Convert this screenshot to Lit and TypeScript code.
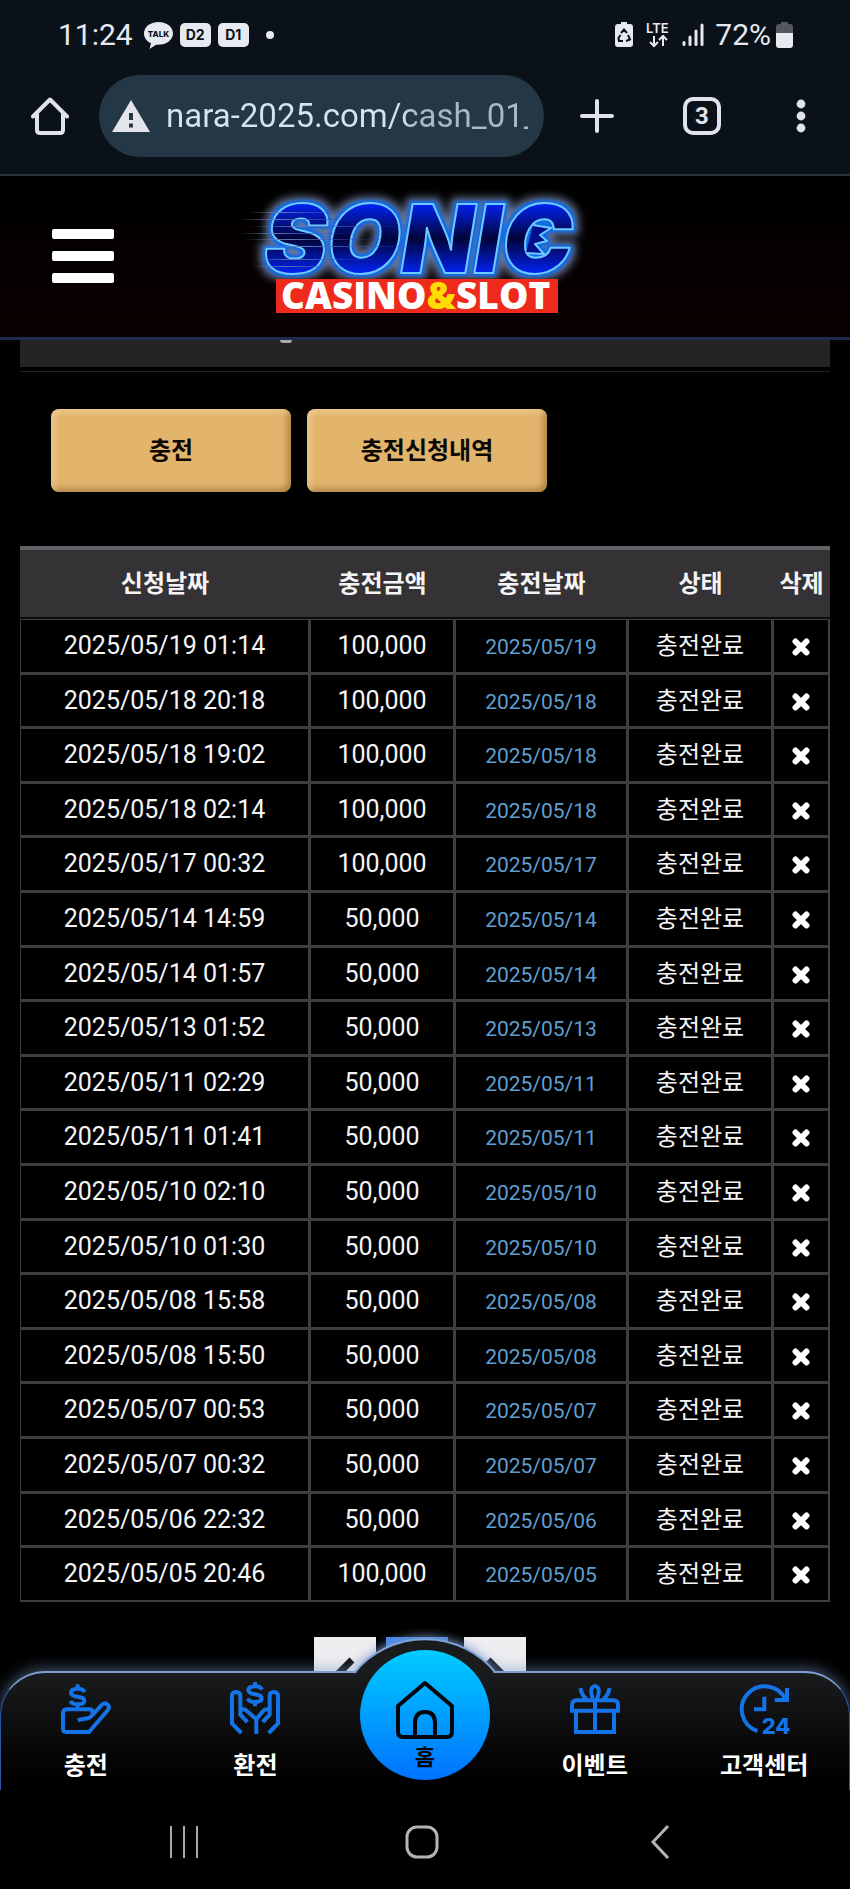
import { LitElement, html, css, svg } from 'lit';
import { customElement, property } from 'lit/decorators.js';

interface Deposit {
  requested: string;
  amount: string;
  date: string;
}

const DEPOSITS: Deposit[] = [
  ['2025/05/19 01:14', '100,000'],
  ['2025/05/18 20:18', '100,000'],
  ['2025/05/18 19:02', '100,000'],
  ['2025/05/18 02:14', '100,000'],
  ['2025/05/17 00:32', '100,000'],
  ['2025/05/14 14:59', '50,000'],
  ['2025/05/14 01:57', '50,000'],
  ['2025/05/13 01:52', '50,000'],
  ['2025/05/11 02:29', '50,000'],
  ['2025/05/11 01:41', '50,000'],
  ['2025/05/10 02:10', '50,000'],
  ['2025/05/10 01:30', '50,000'],
  ['2025/05/08 15:58', '50,000'],
  ['2025/05/08 15:50', '50,000'],
  ['2025/05/07 00:53', '50,000'],
  ['2025/05/07 00:32', '50,000'],
  ['2025/05/06 22:32', '50,000'],
  ['2025/05/05 20:46', '100,000'],
].map(([requested, amount]) => ({ requested, amount, date: requested.slice(0, 10) }));

const dollar = svg`
  <path d="M71 24Q66 14 50 14Q30 14 30 26Q30 35 50 38Q70 41 70 50Q70 61 50 61Q34 61 28 51M50 1V14M50 61V74"/>
`;

const ICONS: Record<string, unknown> = {
  deposit: svg`
    ${dollar}
    <path d="M95 92L121 64Q130 54 139 61Q148 69 140 79L84 144H16Q6 144 6 134V88Q6 76 18 76H84Q95 76 95 86Q95 98 80 103L50 108"/>
  `,
  withdraw: svg`
    <g transform="translate(25 -7)">${dollar}</g>
    <path d="M34 147L6 118V36Q6 24 18 24Q31 24 31 36V92L52 114M31 82Q38 70 50 80L79 106V150"/>
    <path d="M116 147L144 118V36Q144 24 132 24Q119 24 119 36V92L98 114M119 82Q112 70 100 80L79 106"/>
  `,
  gift: svg`
    <path d="M6 86V64Q6 49 20 49H130Q144 49 144 64V80H6M18 86V144H132V86M75 49V144M69 46Q60 20 66 12Q75 0 84 12Q90 20 81 46M31 12Q36 36 50 45M119 12Q114 36 100 45"/>
  `,
  support: svg`
    <path d="M55 141A69 69 0 1 1 140 47M144 12V48H107M76 38V76H45"/>
    <text x="68" y="149" class="hours">24</text>
  `,
};

@customElement('phone-status')
export class PhoneStatus extends LitElement {
  static styles = css`
    :host {
      display: flex;
      align-items: center;
      justify-content: space-between;
      height: 70px;
      padding: 0 57px 0 58px;
      color: #e6e9ef;
      font: 30px/36px Roboto, sans-serif;
    }
    .side {
      display: flex;
      align-items: center;
      gap: 7px;
    }
    .right {
      gap: 5px;
    }
    .talk,
    .lte,
    .signal,
    .saver {
      display: block;
      margin-right: 6px;
    }
    .saver {
      margin-right: 8px;
    }
    .talk {
      margin: 0 0 0 4px;
    }
    .sim {
      width: 31px;
      height: 24px;
      border-radius: 5px;
      background: #e6e9ef;
      color: #0b1118;
      font: bold 14px/24px Inter, sans-serif;
      text-align: center;
    }
    .dot {
      width: 8px;
      height: 8px;
      margin-left: 10px;
      border-radius: 50%;
      background: #e6e9ef;
    }
    text {
      font-family: Inter, sans-serif;
      font-weight: 800;
    }
    .lte text {
      font-weight: 600;
    }
  `;

  render() {
    return html`
      <div class="side">
        <span>11:24</span>
        <svg class="talk" width="29" height="27" viewBox="0 0 29 27" fill="#e6e9ef">
          <path d="M14.500 0C6 0 0 5 0 11.500C0 16 3 19.500 7 21.300L5.500 27L12 22.800C22 23.500 29 18 29 11.500C29 5 23 0 14.500 0Z"/>
          <text x="14.500" y="15" font-size="8" text-anchor="middle" fill="#0b1118">TALK</text>
        </svg>
        <span class="sim">D2</span>
        <span class="sim">D1</span>
        <span class="dot"></span>
      </div>
      <div class="side right">
        <svg class="saver" width="18" height="26" viewBox="0 0 18 26">
          <path fill="#e6e9ef" d="M6 0H12V2H15Q18 2 18 5V22Q18 25 15 25H3Q0 25 0 22V5Q0 2 3 2H6Z"/>
          <path fill="none" stroke="#0b1118" stroke-width="2" d="M6 11L9 7.500L12 11M13 13L15 17.500L11 19M8 19H4L3.500 16L5.500 13"/>
        </svg>
        <svg class="lte" width="25" height="32" viewBox="0 0 25 32">
          <text x="0" y="14" font-size="13" fill="#e6e9ef">LTE</text>
          <path fill="none" stroke="#e6e9ef" stroke-width="2" d="M8 17V27M4 23L8 27L12 23M17 27V17M13 21L17 17L21 21"/>
        </svg>
        <svg class="signal" width="22" height="24" viewBox="0 0 22 24" stroke="#e6e9ef" stroke-width="3" stroke-linecap="round">
          <path d="M2 19.500V21.500M8 14V21.500M14 8V21.500M20 2V21.500"/>
        </svg>
        <span>72%</span>
        <svg width="17" height="26" viewBox="0 0 17 26">
          <path fill="#54575e" d="M5 0H12V2H14Q17 2 17 5V12H0V5Q0 2 3 2H5Z"/>
          <path fill="#e6e9ef" d="M0 11H17V23Q17 26 14 26H3Q0 26 0 23Z"/>
        </svg>
      </div>
    `;
  }
}

@customElement('browser-bar')
export class BrowserBar extends LitElement {
  static styles = css`
    :host {
      display: flex;
      align-items: center;
      height: 92px;
      padding: 0 41px 12px 31px;
      border-bottom: 2px solid #2c3238;
      color: #dfe3ec;
    }
    button {
      display: flex;
      flex: none;
      align-items: center;
      justify-content: center;
      padding: 0;
      border: 0;
      background: none;
      color: inherit;
    }
    .address {
      display: flex;
      flex: 1;
      align-items: center;
      gap: 16px;
      min-width: 0;
      height: 82px;
      box-sizing: border-box;
      margin: 0 34px 0 30px;
      padding: 0 16px 0 13px;
      border-radius: 41px;
      background: #233746;
    }
    .warn {
      flex: none;
    }
    input {
      flex: 1;
      min-width: 0;
      height: 48px;
      padding: 0;
      border: 0;
      outline: 0;
      background: linear-gradient(90deg, #d3e4f0 65%, #a5b9c8 69%);
      background-clip: text;
      -webkit-background-clip: text;
      color: transparent;
      font: 33px/48px Roboto, sans-serif;
    }
    .plus {
      width: 38px;
    }
    .tabs {
      width: 38px;
      height: 38px;
      margin: 0 72px 0 67px;
      box-sizing: border-box;
      border: 4px solid #dfe3ec;
      border-radius: 10px;
      font: bold 24px/30px Roboto, sans-serif;
    }
    .more {
      width: 16px;
    }
  `;

  render() {
    return html`
      <button aria-label="Home">
        <svg width="38" height="38" viewBox="0 0 38 38" fill="none" stroke="currentColor" stroke-width="4" stroke-linecap="round" stroke-linejoin="round">
          <path d="M2 19.500L19 2.500L36 19.500M6 17V33Q6 36 9 36H29Q32 36 32 33V17"/>
        </svg>
      </button>
      <div class="address">
        <svg class="warn" width="38" height="32" viewBox="0 0 38 32">
          <path fill="#e3e5ea" d="M19 0L38 32H0Z"/>
          <path stroke="#233746" stroke-width="4" d="M19 13V20M19 23.500V27.500"/>
        </svg>
        <input type="text" aria-label="Address" value="nara-2025.com/cash_01_" />
      </div>
      <button class="plus" aria-label="New tab">
        <svg width="34" height="34" viewBox="0 0 34 34" stroke="currentColor" stroke-width="4" stroke-linecap="round">
          <path d="M17 2V32M2 17H32"/>
        </svg>
      </button>
      <button class="tabs" aria-label="Tabs">3</button>
      <button class="more" aria-label="Menu">
        <svg width="10" height="34" viewBox="0 0 10 34" fill="currentColor">
          <circle cx="5" cy="5" r="4.400"/><circle cx="5" cy="17" r="4.400"/><circle cx="5" cy="29" r="4.400"/>
        </svg>
      </button>
    `;
  }
}

@customElement('site-header')
export class SiteHeader extends LitElement {
  static styles = css`
    :host {
      display: grid;
      grid-template-columns: 1fr auto 1fr;
      align-items: center;
      height: 164px;
      box-sizing: border-box;
      padding: 0 52px 2px;
      border-bottom: 3px solid #20294f;
      background: linear-gradient(#000, #0b0001);
    }
    .menu {
      display: flex;
      flex-direction: column;
      gap: 12px;
      width: 62px;
      padding: 0;
      border: 0;
      background: none;
    }
    .bar {
      height: 10px;
      border-radius: 2px;
      background: #fff;
    }
    .logo {
      display: block;
      overflow: visible;
    }
    .sonic {
      font: italic 900 95px Inter, sans-serif;
    }
    .sub {
      font: 800 37px 'Open Sans', sans-serif;
    }
  `;

  render() {
    return html`
      <button class="menu" aria-label="메뉴">
        <span class="bar"></span><span class="bar"></span><span class="bar"></span>
      </button>
      <a href="#" aria-label="SONIC CASINO&SLOT">
        <svg class="logo" width="360" height="150" viewBox="20 0 360 150">
          <defs>
            <filter id="neon" x="-20%" y="-40%" width="140%" height="180%" color-interpolation-filters="sRGB">
              <feMorphology in="SourceAlpha" operator="dilate" radius="5" result="wide"/>
              <feGaussianBlur in="wide" stdDeviation="4" result="haze"/>
              <feFlood flood-color="#8193c0" flood-opacity="0.800"/>
              <feComposite in2="haze" operator="in" result="outer"/>
              <feMorphology in="SourceAlpha" operator="dilate" radius="2" result="near"/>
              <feGaussianBlur in="near" stdDeviation="1.500" result="soft"/>
              <feFlood flood-color="#0a68ec"/>
              <feComposite in2="soft" operator="in" result="inner"/>
              <feMerge>
                <feMergeNode in="outer"/>
                <feMergeNode in="inner"/>
                <feMergeNode in="SourceGraphic"/>
              </feMerge>
            </filter>
            <linearGradient id="body" x1="0" x2="0" y1="0" y2="1">
              <stop offset="0.200" stop-color="#0222f0"/>
              <stop offset="0.500" stop-color="#010438"/>
              <stop offset="0.800" stop-color="#0222f0"/>
            </linearGradient>
            <linearGradient id="speed">
              <stop offset="0" stop-color="#5f7ab0" stop-opacity="0"/>
              <stop offset="0.300" stop-color="#5f7ab0"/>
              <stop offset="1" stop-color="#0a2bd0" stop-opacity="0"/>
            </linearGradient>
          </defs>
          <g filter="url(#neon)" stroke="#6fc8ff" stroke-width="2" stroke-linejoin="round">
            <text class="sonic" x="39" y="92" fill="url(#body)">SONIC</text>
            <path fill="#010e8c" d="M308 44L326 47L315 54L322 60L310 63L319 73L301 72"/>
          </g>
          <g fill="url(#speed)">
            <rect x="24" y="31" width="110" height="1"/>
            <rect x="15" y="38" width="130" height="1"/>
            <rect x="24" y="45" width="170" height="1"/>
            <rect x="14" y="52" width="120" height="1"/>
            <rect x="19" y="58" width="150" height="1"/>
            <rect x="27" y="65" width="180" height="1"/>
            <rect x="28" y="78" width="130" height="1"/>
            <rect x="27" y="85" width="110" height="1"/>
          </g>
          <rect x="51" y="98" width="282" height="34" fill="#ee2a1c"/>
          <text class="sub" x="56" y="128" fill="#fff">CASINO<tspan fill="#ffdc00">&amp;</tspan>SLOT</text>
        </svg>
      </a>
    `;
  }
}

@customElement('deposit-table')
export class DepositTable extends LitElement {
  @property({ attribute: false }) rows: Deposit[] = [];

  static styles = css`
    :host {
      display: block;
    }
    table {
      width: 100%;
      border-spacing: 0;
      table-layout: fixed;
      color: #f4f4f6;
      font: 24px/36px Roboto, 'Noto Sans CJK KR', sans-serif;
      text-align: center;
    }
    .amount,
    .state {
      width: 145px;
    }
    .processed {
      width: 173px;
    }
    .remove {
      width: 57px;
    }
    th {
      height: 73px;
      box-sizing: border-box;
      padding: 0;
      border-top: 4px solid #646266;
      border-bottom: 2px solid #0c0c0d;
      background: #343235;
      font-weight: bold;
    }
    td {
      height: 55px;
      box-sizing: border-box;
      padding: 0;
      border: solid #3f3d41;
      border-width: 1px 2px 2px 1px;
    }
    tr:nth-child(5n + 2) td,
    tr:nth-child(5n + 4) td {
      height: 54px;
    }
    .num {
      font-size: 25px;
    }
    .date {
      padding-top: 2px;
      color: #5f9fd0;
      font-size: 21px;
    }
    button {
      display: block;
      margin: 0 auto;
      padding: 2px 0 0;
      border: 0;
      background: none;
    }
    svg {
      display: block;
    }
  `;

  render() {
    return html`
      <table>
        <thead>
          <tr>
            <th>신청날짜</th>
            <th class="amount">충전금액</th>
            <th class="processed">충전날짜</th>
            <th class="state">상태</th>
            <th class="remove">삭제</th>
          </tr>
        </thead>
        <tbody>
          ${this.rows.map(
            (row) => html`
              <tr>
                <td class="num">${row.requested}</td>
                <td class="num">${row.amount}</td>
                <td class="date">${row.date}</td>
                <td>충전완료</td>
                <td>
                  <button aria-label="삭제">
                    <svg width="18" height="18" viewBox="0 0 18 18" stroke="#fff" stroke-width="6" stroke-linecap="round">
                      <path d="M3.500 3.500L14.500 14.500M14.500 3.500L3.500 14.500"/>
                    </svg>
                  </button>
                </td>
              </tr>
            `
          )}
        </tbody>
      </table>
    `;
  }
}

@customElement('bottom-nav')
export class BottomNav extends LitElement {
  static styles = css`
    :host {
      display: block;
      position: relative;
    }
    nav {
      display: grid;
      grid-template-columns: repeat(5, 1fr);
      grid-template-rows: 100%;
      align-items: end;
      height: 119px;
      box-sizing: border-box;
      border: solid #2c55a5;
      border-width: 2px 1px 0;
      border-top-color: #7f9fd2;
      border-radius: 45px 45px 0 0;
      background: linear-gradient(#1a1b1d, #000 90%);
      box-shadow: 0 -3px 14px rgba(125, 155, 205, 0.5);
    }
    .hump {
      position: absolute;
      left: 50%;
      top: -54px;
      margin-left: -100px;
    }
    .rim {
      filter: drop-shadow(0 -2px 5px rgba(125, 155, 205, 0.8));
    }
    a {
      display: flex;
      flex-direction: column;
      align-items: center;
      gap: 12px;
      padding-bottom: 8px;
      color: #fff;
      font: bold 24px/36px 'Noto Sans CJK KR', sans-serif;
      text-decoration: none;
    }
    .icon {
      display: block;
      fill: none;
      stroke: #1473e6;
      stroke-width: 12;
      overflow: visible;
    }
    .hours {
      fill: #1473e6;
      stroke: none;
      font: 800 66px Inter, sans-serif;
    }
    .home {
      position: relative;
      justify-self: center;
      width: 130px;
      height: 130px;
      margin-bottom: 10px;
      padding: 29px 0 0;
      box-sizing: border-box;
      gap: 0;
      border-radius: 50%;
      background: linear-gradient(#00ccff, #0072ff);
      color: #04060c;
      font-size: 22px;
      line-height: 32px;
    }
    .home svg {
      flex: none;
    }
  `;

  item(icon: string, label: string) {
    return html`
      <a href="#">
        <svg class="icon" width="50" height="50" viewBox="0 0 150 150">${ICONS[icon]}</svg>
        <span>${label}</span>
      </a>
    `;
  }

  render() {
    return html`
      <nav>
        <svg class="hump" width="200" height="58" viewBox="-20 -20 200 58">
          <path class="rim" fill="#1b1c1e" stroke="#7fa3dc" stroke-width="2" d="M10 35A91 91 0 0 1 150 35"/>
          <path fill="#1a1b1d" d="M11 36A91 91 0 0 1 149 36V38H11Z"/>
        </svg>
        ${this.item('deposit', '충전')} ${this.item('withdraw', '환전')}
        <a class="home" href="#">
          <svg width="60" height="60" viewBox="0 0 60 60" fill="none" stroke="#04060c" stroke-width="4" stroke-linejoin="round">
            <path d="M30 4L3 27V53Q3 58 8 58H52Q57 58 57 53V27ZM20 58V44Q20 33 30 33Q40 33 40 44V58"/>
          </svg>
          <span>홈</span>
        </a>
        ${this.item('gift', '이벤트')} ${this.item('support', '고객센터')}
      </nav>
    `;
  }
}

@customElement('app-root')
export class AppRoot extends LitElement {
  static styles = css`
    :host {
      display: flex;
      flex-direction: column;
      min-height: 100vh;
      background: #000;
    }
    .chrome {
      background: #0b1118;
    }
    main {
      padding: 0 20px;
    }
    .notice {
      height: 27px;
      overflow: hidden;
      background: #252326;
    }
    .tail {
      display: block;
      width: 12px;
      height: 3px;
      margin-left: 260px;
      border-radius: 0 0 6px 6px;
      background: #aaa9ad;
    }
    .rule {
      height: 4px;
      border-bottom: 1px solid #222124;
    }
    .actions {
      display: flex;
      gap: 16px;
      padding: 37px 31px 54px;
    }
    .actions button {
      width: 240px;
      height: 83px;
      padding: 0 0 4px;
      border: 0;
      border-radius: 8px;
      background: #e2b46c;
      box-shadow: inset 3px 3px 6px rgba(255, 230, 190, 0.5), inset -3px -3px 6px rgba(110, 75, 20, 0.5);
      color: #0c0805;
      font: bold 24px/36px 'Noto Sans CJK KR', sans-serif;
    }
    .pages {
      display: flex;
      justify-content: center;
      gap: 10px;
      padding: 35px 10px 0 0;
    }
    .pages button {
      width: 62px;
      height: 72px;
      padding: 0;
      border: 0;
      background: #eeedf0;
    }
    .pages .current {
      margin-right: 6px;
      background: #3f86e8;
      color: #fff;
      font: 24px/72px Roboto, sans-serif;
    }
    .pages svg,
    .system svg {
      display: block;
      margin: 0 auto;
    }
    bottom-nav {
      margin-top: -38px;
    }
    .system {
      display: grid;
      position: relative;
      flex: 1;
      grid-template-columns: 1fr 1fr 1fr;
      align-items: center;
      justify-items: center;
      min-height: 99px;
      box-sizing: border-box;
      padding: 4px 71px 0 65px;
      background: #000;
    }
    .system button {
      padding: 0;
      border: 0;
      background: none;
    }
  `;

  render() {
    return html`
      <div class="chrome">
        <phone-status></phone-status>
        <browser-bar></browser-bar>
      </div>
      <site-header></site-header>
      <main>
        <div class="notice"><span class="tail"></span></div>
        <div class="rule"></div>
        <div class="actions">
          <button>충전</button>
          <button>충전신청내역</button>
        </div>
        <deposit-table .rows=${DEPOSITS}></deposit-table>
        <div class="pages">
          <button aria-label="이전">
            <svg width="20" height="32" viewBox="0 0 20 32" fill="none" stroke="#0c0c0e" stroke-width="7"><path d="M17 3L4 16L17 29"/></svg>
          </button>
          <button class="current" aria-label="1"></button>
          <button aria-label="다음">
            <svg width="20" height="32" viewBox="0 0 20 32" fill="none" stroke="#0c0c0e" stroke-width="7"><path d="M3 3L16 16L3 29"/></svg>
          </button>
        </div>
      </main>
      <bottom-nav></bottom-nav>
      <div class="system">
        <button aria-label="Recents">
          <svg width="32" height="34" viewBox="0 0 32 34" stroke="#a9a9ab" stroke-width="2"><path d="M3 1V33M16 1V33M29 1V33"/></svg>
        </button>
        <button aria-label="Home">
          <svg width="34" height="34" viewBox="0 0 34 34" fill="none" stroke="#b4b4b6" stroke-width="3"><rect x="2" y="2" width="30" height="30" rx="10"/></svg>
        </button>
        <button aria-label="Back">
          <svg width="20" height="34" viewBox="0 0 20 34" fill="none" stroke="#b4b4b6" stroke-width="3"><path d="M18 1L3 17L18 33"/></svg>
        </button>
      </div>
    `;
  }
}
